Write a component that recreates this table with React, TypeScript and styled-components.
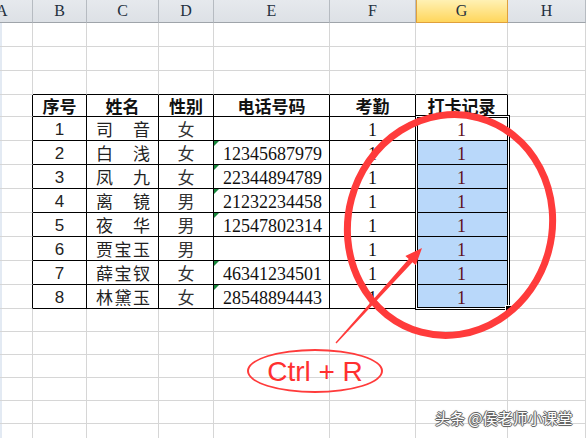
import React from 'react';
import styled, { createGlobalStyle } from 'styled-components';

const GlobalStyle = createGlobalStyle`
  html, body { margin: 0; padding: 0; background: #fff; overflow: hidden; }
  body { font-family: "Liberation Sans", Arial, sans-serif; }
`;

const GRID = '#d6d6d6';
const INK = '#000';
const COLS = '33px 54px 72px 55px 116px 86px 92px 1fr';
const ROWS = [24, 24, 24, 22, 24, 24, 24, 24, 24, 24, 24, 24, 23, 23, 23, 23, 23, 23];

const Page = styled.div`
  position: relative;
  width: 586px;
  height: 438px;
  overflow: hidden;
  background: #fff;
`;

const HeaderRow = styled.div`
  display: grid;
  grid-template-columns: ${COLS};
  height: 23px;
`;

const HeaderCell = styled.div<{ $active?: boolean; $shift?: number }>`
  box-sizing: border-box;
  display: flex;
  align-items: center;
  justify-content: ${p => (p.$shift !== undefined ? 'flex-start' : 'center')};
  padding-left: 0;
  background: ${p => (p.$active ? 'linear-gradient(#fff1b4, #ffd65c)' : 'linear-gradient(#e6e9ed, #dde1e6)')};
  border-right: 1px solid ${p => (p.$active ? '#e0a03c' : '#b6bbc1')};
  border-bottom: 1px solid ${p => (p.$active ? '#e0a03c' : '#9fa4aa')};
  box-shadow: ${p => (p.$active ? 'inset 1px 0 0 #e0a03c' : 'none')};
  font-family: "Liberation Serif", "Times New Roman", serif;
  font-size: 16px;
  color: #23303e;
  span { margin-left: ${p => (p.$shift !== undefined ? `${p.$shift}px` : '0')}; }
`;

const Sheet = styled.div`
  display: grid;
  grid-template-columns: ${COLS};
  grid-template-rows: ${ROWS.map(r => `${r}px`).join(' ')};
`;

const Cell = styled.div<{ $rb: string; $bb: string; $bg?: string; $edge?: boolean }>`
  position: relative;
  box-sizing: border-box;
  min-width: 0;
  display: flex;
  align-items: flex-end;
  justify-content: center;
  border-right: 1px solid ${p => p.$rb};
  border-bottom: 1px solid ${p => p.$bb};
  background: ${p => p.$bg || '#fff'};
  box-shadow: ${p => (p.$edge ? 'inset 2px 0 0 #e3eaf3' : 'none')};
`;

const HeadText = styled.span`
  font-family: "Noto Sans CJK SC", sans-serif;
  font-weight: 700;
  font-size: 17px;
  line-height: 1;
  color: #111;
  padding-bottom: 2px;
`;

const SeqText = styled.span`
  font-family: "Liberation Sans", Arial, sans-serif;
  font-size: 17px;
  line-height: 1;
  color: #222;
  padding-bottom: 2px;
`;

const NameBox = styled.div`
  flex: 1;
  display: flex;
  justify-content: space-between;
  padding: 0 8px 3px 9px;
  font-family: "Noto Sans CJK SC", sans-serif;
  font-size: 17px;
  line-height: 1;
  color: #222;
`;

const CjkText = styled.span`
  font-family: "Noto Sans CJK SC", sans-serif;
  font-size: 17px;
  line-height: 1;
  color: #333;
  padding-bottom: 3px;
`;

const NumText = styled.span<{ $left?: boolean; $color?: string }>`
  font-family: "Liberation Serif", "Times New Roman", serif;
  font-size: 18px;
  line-height: 1;
  color: ${p => p.$color || '#111'};
  padding-bottom: 1px;
  ${p => (p.$left ? 'margin-right: auto; padding-left: 9px;' : '')}
`;

const TextFlag = styled.i`
  position: absolute;
  top: 0;
  left: 0;
  width: 0;
  height: 0;
  border-top: 5px solid #16863a;
  border-right: 5px solid transparent;
`;

const Selection = styled.div`
  position: absolute;
  left: 415px;
  top: 115px;
  width: 95px;
  height: 195px;
  box-sizing: border-box;
  border: 1px solid #000;
  box-shadow: inset 0 0 0 1px #fff, inset 0 0 0 2px #000;
  pointer-events: none;
`;

const Handle = styled.i`
  position: absolute;
  right: -3px;
  bottom: -3px;
  width: 5px;
  height: 5px;
  background: #000;
  border: 1px solid #fff;
  box-sizing: content-box;
`;

const Marks = styled.svg`
  position: absolute;
  left: 0;
  top: 0;
  pointer-events: none;
`;

const Callout = styled.div`
  position: absolute;
  left: 247px;
  top: 349px;
  width: 136px;
  height: 44px;
  box-sizing: border-box;
  border: 2.5px solid #ff3b3b;
  border-radius: 50%;
  display: flex;
  align-items: center;
  justify-content: center;
  font-family: "Liberation Sans", Arial, sans-serif;
  font-size: 28px;
  line-height: 1;
  color: #ff3030;
  padding-top: 2px;
`;

const Watermark = styled.div`
  position: absolute;
  left: 435px;
  top: 409px;
  font-family: "Noto Sans CJK SC", sans-serif;
  font-size: 15px;
  line-height: 18px;
  color: #fff;
  white-space: nowrap;
  text-shadow: 1px 0 0 #666, -1px 0 0 #666, 0 1px 0 #666, 0 -1px 0 #666, 0 0 2px #444;
`;

type Row = { seq: number; name: string; sex: string; phone: string };
const DATA: Row[] = [
  { seq: 1, name: '司音', sex: '女', phone: '' },
  { seq: 2, name: '白浅', sex: '女', phone: '12345687979' },
  { seq: 3, name: '凤九', sex: '女', phone: '22344894789' },
  { seq: 4, name: '离镜', sex: '男', phone: '21232234458' },
  { seq: 5, name: '夜华', sex: '男', phone: '12547802314' },
  { seq: 6, name: '贾宝玉', sex: '男', phone: '' },
  { seq: 7, name: '薛宝钗', sex: '女', phone: '46341234501' },
  { seq: 8, name: '林黛玉', sex: '女', phone: '28548894443' },
];
const HEAD = ['序号', '姓名', '性别', '电话号码', '考勤', '打卡记录'];
const LETTERS = ['A', 'B', 'C', 'D', 'E', 'F', 'G', 'H'];

function content(r: number, c: number): React.ReactNode {
  if (r === 3 && c >= 1 && c <= 6) return <HeadText>{HEAD[c - 1]}</HeadText>;
  const d = DATA[r - 4];
  if (!d) return null;
  switch (c) {
    case 1: return <SeqText>{d.seq}</SeqText>;
    case 2: return <NameBox>{d.name.split('').map((ch, i) => <span key={i}>{ch}</span>)}</NameBox>;
    case 3: return <CjkText>{d.sex}</CjkText>;
    case 4: return d.phone ? <><TextFlag /><NumText $left>{d.phone}</NumText></> : null;
    case 5: return <NumText>1</NumText>;
    case 6: return <NumText $color="#5e1020">1</NumText>;
    default: return null;
  }
}

export default function App() {
  const cells: React.ReactNode[] = [];
  ROWS.forEach((_, r) => {
    for (let c = 0; c < 8; c++) {
      const rb = r >= 3 && r <= 11 && c <= 6 ? INK : GRID;
      const bb = c >= 1 && c <= 6 && r >= 2 && r <= 11 ? INK : GRID;
      const bg = c === 6 && r >= 5 && r <= 11 ? '#b9d8fa' : undefined;
      cells.push(
        <Cell key={`${r}-${c}`} $rb={rb} $bb={bb} $bg={bg} $edge={c === 0}>
          {content(r, c)}
        </Cell>
      );
    }
  });

  return (
    <>
      <GlobalStyle />
      <Page>
        <HeaderRow>
          {LETTERS.map((l, i) => (
            <HeaderCell key={l} $active={l === 'G'} $shift={l === 'A' ? -4 : undefined}>
              <span>{l}</span>
            </HeaderCell>
          ))}
        </HeaderRow>
        <Sheet>{cells}</Sheet>
        <Selection>
          <Handle />
        </Selection>
        <Marks width="586" height="438" viewBox="0 0 586 438">
          <ellipse cx="450" cy="225" rx="102" ry="111" transform="rotate(15 450 225)" fill="none" stroke="#ff3b3b" strokeWidth="7" />
          <polygon
            points="335.5,342.5 408.7,258.9 405.4,255.9 422,248 415.8,265.3 412.5,262.3 336.5,343.5"
            fill="#ff3b3b"
          />
        </Marks>
        <Callout>Ctrl + R</Callout>
        <Watermark>头条 @侯老师小课堂</Watermark>
      </Page>
    </>
  );
}
